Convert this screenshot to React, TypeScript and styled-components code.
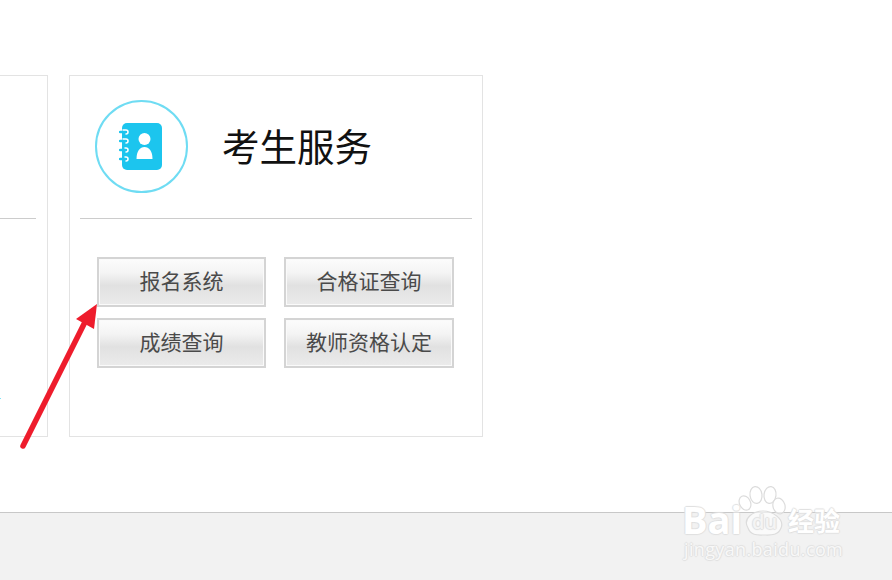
import React from "react";
import styled, { createGlobalStyle } from "styled-components";

const Global = createGlobalStyle`
  html, body { margin: 0; padding: 0; background: #fff; }
  body { font-family: "Noto Sans CJK SC", "Liberation Sans", sans-serif; }
`;

const Page = styled.div`
  position: relative;
  width: 892px;
  height: 580px;
  overflow: hidden;
  display: flex;
  flex-direction: column;
  background: #fff;
`;

const Main = styled.main`
  flex: 1;
  display: flex;
  align-items: flex-start;
  gap: 21px;
  padding-top: 75px;
`;

const ClippedCard = styled.section`
  box-sizing: border-box;
  width: 48px;
  height: 362px;
  border: 1px solid #e3e3e3;
  border-left: none;
  padding-top: 142px;
  padding-right: 11px;
`;

const Card = styled.section`
  box-sizing: border-box;
  width: 414px;
  height: 362px;
  border: 1px solid #e3e3e3;
  padding: 0 10px;
`;

const Header = styled.header`
  box-sizing: border-box;
  height: 143px;
  display: flex;
  align-items: center;
  gap: 34px;
  padding: 0 0 1px 15px;
  border-bottom: 1px solid #ccc;
`;

const Circle = styled.div`
  box-sizing: border-box;
  width: 93px;
  height: 93px;
  border: 2px solid #6fdcf3;
  border-radius: 50%;
  display: flex;
  align-items: center;
  justify-content: center;
`;

const Title = styled.h2`
  margin: 0 0 4px;
  font-size: 37.5px;
  line-height: 44px;
  font-weight: 400;
  color: #111;
`;

const Divider = styled.div`
  height: 1px;
  background: #ccc;
`;

const Buttons = styled.div`
  display: grid;
  grid-template-columns: 169px 170px;
  grid-auto-rows: 50px;
  column-gap: 18px;
  row-gap: 11px;
  padding: 38px 0 0 17px;
`;

const Button = styled.button`
  box-sizing: border-box;
  padding: 0 0 4px;
  border: 2px solid #d4d4d4;
  box-shadow: inset 0 0 0 1px #fafafa;
  background: linear-gradient(180deg, #fcfcfc 0%, #f4f4f4 30%, #e1e1e1 58%, #ebebeb 100%);
  font-family: "Noto Sans CJK SC", sans-serif;
  font-size: 21px;
  line-height: 42px;
  font-weight: 400;
  color: #4a4a4a;
  white-space: nowrap;
`;

const Footer = styled.footer`
  height: 67px;
  border-top: 1px solid #c8c8c8;
  background: #f2f2f2;
`;

const ArrowLayer = styled.svg`
  position: absolute;
  left: 0;
  top: 290px;
`;

const Speck = styled.span`
  position: absolute;
  left: 0;
  top: 398px;
  width: 1px;
  height: 1px;
  background: #7fe3f7;
`;

const Watermark = styled.div`
  position: absolute;
  left: 684px;
  top: 484px;
  width: 165px;
  height: 80px;
  color: #fff;
  font-family: "Open Sans", "Noto Sans CJK SC", sans-serif;
`;

const outline = `
  text-shadow: 1px 0 1px #e0e0e0, -1px 0 1px #e0e0e0, 0 1px 1px #e0e0e0, 0 -1px 1px #e0e0e0;
`;

const Bai = styled.span`
  position: absolute;
  left: -2px;
  top: 16px;
  font-size: 38px;
  line-height: 38px;
  font-weight: 700;
  ${outline}
`;

const Du = styled.span`
  position: absolute;
  left: 68px;
  top: 26px;
  font-size: 20px;
  line-height: 24px;
  font-weight: 600;
  color: #f4f4f4;
  ${outline}
`;

const Jingyan = styled.span`
  position: absolute;
  left: 104px;
  top: 19px;
  font-family: "Noto Sans CJK SC", sans-serif;
  font-size: 26px;
  line-height: 34px;
  font-weight: 700;
  white-space: nowrap;
  ${outline}
`;

const Url = styled.span`
  position: absolute;
  left: 0;
  top: 55px;
  font-size: 18px;
  line-height: 20px;
  letter-spacing: 0.35px;
  white-space: nowrap;
  color: #f8f8f8;
  ${outline}
`;

const Paw = styled.svg`
  position: absolute;
  left: 0;
  top: 0;
`;

const BookIcon = () => (
  <svg width="46" height="48" viewBox="0 0 46 48">
    <rect x="3" y="0" width="40" height="47" rx="5" fill="#1cc5ee" />
    <g fill="none" stroke="#1cc5ee" strokeWidth="2.4" strokeLinecap="round">
      <path d="M1 9 H5" /><path d="M1 18 H5" /><path d="M1 27 H5" /><path d="M1 36 H5" />
    </g>
    <g fill="none" stroke="#fff" strokeWidth="1.5" strokeLinecap="round">
      <path d="M4 7 H7 a2 2 0 0 1 0 4" />
      <path d="M4 16 H7 a2 2 0 0 1 0 4" />
      <path d="M6 25 H7 a2 2 0 0 1 0 4" />
      <path d="M6 34 H7 a2 2 0 0 1 0 4" />
    </g>
    <circle cx="25.5" cy="16" r="6" fill="#fff" />
    <path d="M17.5 36 C17.5 28 21 24 25.5 24 C30 24 33.5 28 33.5 36 Z" fill="#fff" />
  </svg>
);

export default function App() {
  return (
    <Page>
      <Global />
      <Main>
        <ClippedCard>
          <Divider />
        </ClippedCard>
        <Card>
          <Header>
            <Circle>
              <BookIcon />
            </Circle>
            <Title>考生服务</Title>
          </Header>
          <Buttons>
            <Button>报名系统</Button>
            <Button>合格证查询</Button>
            <Button>成绩查询</Button>
            <Button>教师资格认定</Button>
          </Buttons>
        </Card>
      </Main>
      <Footer />
      <Speck />
      <ArrowLayer width="110" height="170" viewBox="0 290 110 170">
        <path d="M23 446 L85 322" stroke="#ee1c2c" strokeWidth="5.5" strokeLinecap="round" fill="none" />
        <path d="M97 304 L76 319 L94 329 Z" fill="#ee1c2c" />
      </ArrowLayer>
      <Watermark>
        <Paw width="165" height="60" viewBox="0 0 165 60">
          <g fill="#fff" fillOpacity="0.6" stroke="#dcdcdc" strokeWidth="1.2">
            <ellipse cx="61" cy="19" rx="5.5" ry="7.5" transform="rotate(-25 61 19)" />
            <ellipse cx="72" cy="11" rx="6" ry="8.5" transform="rotate(-8 72 11)" />
            <ellipse cx="86" cy="11" rx="6" ry="8.5" transform="rotate(8 86 11)" />
            <ellipse cx="95" cy="22" rx="6" ry="8" transform="rotate(-15 95 22)" />
            <path d="M64 44 C58 34 70 27 79 27 C88 27 101 35 97 44 C94 52 86 51 80 51 C74 51 67 52 64 44 Z" />
          </g>
        </Paw>
        <Bai>Bai</Bai>
        <Du>du</Du>
        <Jingyan>经验</Jingyan>
        <Url>jingyan.baidu.com</Url>
      </Watermark>
    </Page>
  );
}
